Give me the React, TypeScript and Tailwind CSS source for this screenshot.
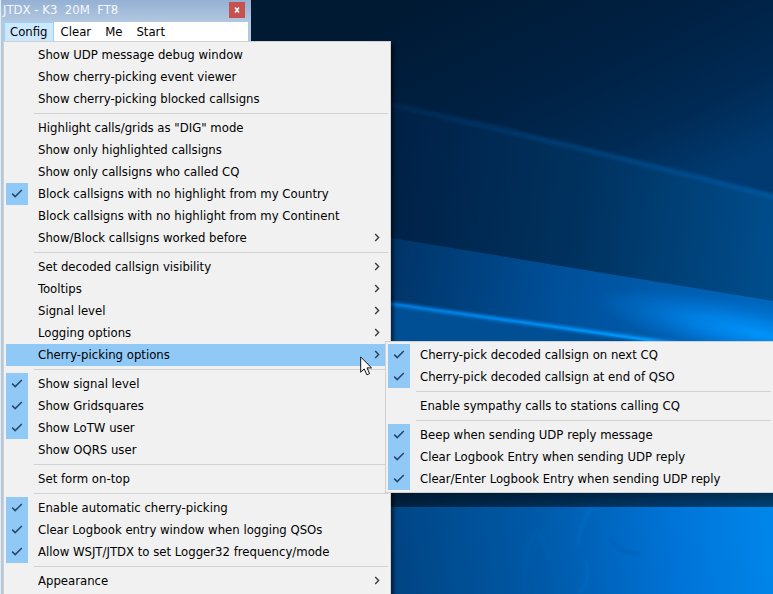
import React from "react";

type Item = {
  label: string;
  checked?: boolean;
  submenu?: boolean;
  active?: boolean;
};

const configMenu: Item[][] = [
  [
    { label: "Show UDP message debug window" },
    { label: "Show cherry-picking event viewer" },
    { label: "Show cherry-picking blocked callsigns" },
  ],
  [
    { label: 'Highlight calls/grids as "DIG" mode' },
    { label: "Show only highlighted callsigns" },
    { label: "Show only callsigns who called CQ" },
    { label: "Block callsigns with no highlight from my Country", checked: true },
    { label: "Block callsigns with no highlight from my Continent" },
    { label: "Show/Block callsigns worked before", submenu: true },
  ],
  [
    { label: "Set decoded callsign visibility", submenu: true },
    { label: "Tooltips", submenu: true },
    { label: "Signal level", submenu: true },
    { label: "Logging options", submenu: true },
    { label: "Cherry-picking options", submenu: true, active: true },
  ],
  [
    { label: "Show signal level", checked: true },
    { label: "Show Gridsquares", checked: true },
    { label: "Show LoTW user", checked: true },
    { label: "Show OQRS user" },
  ],
  [{ label: "Set form on-top" }],
  [
    { label: "Enable automatic cherry-picking", checked: true },
    { label: "Clear Logbook entry window when logging QSOs", checked: true },
    { label: "Allow WSJT/JTDX to set Logger32 frequency/mode", checked: true },
  ],
  [{ label: "Appearance", submenu: true }],
];

const cherryMenu: Item[][] = [
  [
    { label: "Cherry-pick decoded callsign on next CQ", checked: true },
    { label: "Cherry-pick decoded callsign at end of QSO", checked: true },
  ],
  [{ label: "Enable sympathy calls to stations calling CQ" }],
  [
    { label: "Beep when sending UDP reply message", checked: true },
    { label: "Clear Logbook Entry when sending UDP reply", checked: true },
    { label: "Clear/Enter Logbook Entry when sending UDP reply", checked: true },
  ],
];

function Check() {
  return (
    <svg viewBox="0 0 22 22" className="col-start-1 row-start-1 size-[22px]" aria-hidden="true">
      <path d="M6.2 10.6 L9.2 13.6 L15.8 7" fill="none" stroke="#24486a" strokeWidth="1.5" />
    </svg>
  );
}

function Row({ item }: { item: Item }) {
  if (item.checked) {
    return (
      <label className="flex h-[22px] items-center">
        <span className="mr-2.5 grid size-[22px] bg-[#90c8f6]">
          <input type="checkbox" defaultChecked className="col-start-1 row-start-1 size-[22px] appearance-none" />
          <Check />
        </span>
        {item.label}
      </label>
    );
  }
  return (
    <button
      type="button"
      role="menuitem"
      aria-haspopup={item.submenu ? "menu" : undefined}
      className={
        "flex h-[22px] w-full items-center justify-between pr-[5px] pl-8 text-left " +
        (item.active ? "bg-[#90c8f6]" : "")
      }
    >
      {item.label}
      {item.submenu && (
        <svg viewBox="0 0 8 10" className="h-2.5 w-2" aria-hidden="true">
          <path d="M2.2 1 L5.6 4.5 L2.2 8" fill="none" stroke="#3a3a3a" strokeWidth="1.4" />
        </svg>
      )}
    </button>
  );
}

function Menu({ groups, name }: { groups: Item[][]; name: string }) {
  return (
    <div role="menu" aria-label={name} className="border border-[#d0d0d0] bg-[#f1f1f1] py-0.5 pr-1 pl-0.5">
      {groups.map((group, i) => (
        <React.Fragment key={i}>
          {i > 0 && (
            <div role="separator" className="-mr-0.5 ml-7 flex h-[7px] items-center">
              <div className="h-px w-full bg-[#d2d2d2]" />
            </div>
          )}
          {group.map((item) => (
            <Row key={item.label} item={item} />
          ))}
        </React.Fragment>
      ))}
    </div>
  );
}

function Wallpaper() {
  return (
    <svg
      viewBox="0 0 773 594"
      preserveAspectRatio="none"
      className="absolute inset-0 size-full"
      aria-hidden="true"
    >
      <defs>
        <linearGradient id="sky" gradientUnits="userSpaceOnUse" x1="440" y1="0" x2="560" y2="250">
          <stop offset="0" stopColor="#001a34" />
          <stop offset="0.45" stopColor="#002144" />
          <stop offset="0.75" stopColor="#002a54" />
          <stop offset="1" stopColor="#003a70" />
        </linearGradient>
        <linearGradient id="mid" gradientUnits="userSpaceOnUse" x1="392" y1="180" x2="773" y2="240">
          <stop offset="0" stopColor="#002147" />
          <stop offset="0.5" stopColor="#00325f" />
          <stop offset="1" stopColor="#004d8c" />
        </linearGradient>
        <linearGradient id="low" gradientUnits="userSpaceOnUse" x1="392" y1="260" x2="773" y2="320">
          <stop offset="0" stopColor="#003467" />
          <stop offset="0.45" stopColor="#00509a" />
          <stop offset="1" stopColor="#0068c0" />
        </linearGradient>
        <linearGradient id="beam" gradientUnits="userSpaceOnUse" x1="392" y1="303" x2="680" y2="345">
          <stop offset="0" stopColor="#0077d8" />
          <stop offset="1" stopColor="#009aff" />
        </linearGradient>
        <linearGradient id="edge" gradientUnits="userSpaceOnUse" x1="392" y1="0" x2="773" y2="0">
          <stop offset="0" stopColor="#00386d" stopOpacity="0.3" />
          <stop offset="0.5" stopColor="#003e76" />
          <stop offset="1" stopColor="#00559c" />
        </linearGradient>
        <linearGradient id="floor" gradientUnits="userSpaceOnUse" x1="392" y1="580" x2="773" y2="530">
          <stop offset="0" stopColor="#004482" />
          <stop offset="0.4" stopColor="#005aa9" />
          <stop offset="0.75" stopColor="#0074d8" />
          <stop offset="1" stopColor="#0086ea" />
        </linearGradient>
        <radialGradient id="glow">
          <stop offset="0" stopColor="#0094fa" />
          <stop offset="0.4" stopColor="#0086ec" stopOpacity="0.8" />
          <stop offset="1" stopColor="#0078dc" stopOpacity="0" />
        </radialGradient>
        <filter id="soft" x="-10%" y="-50%" width="120%" height="200%">
          <feGaussianBlur stdDeviation="1.5" />
        </filter>
        <clipPath id="lowClip">
          <path d="M380 236 L773 301 V360 H380Z" />
        </clipPath>
      </defs>
      <rect width="773" height="594" fill="url(#sky)" />
      <path d="M380 103 Q560 142 773 196 V310 H380Z" fill="url(#mid)" />
      <path d="M385 103 Q560 142 783 199" fill="none" stroke="url(#edge)" strokeWidth="5" filter="url(#soft)" />
      <path d="M380 236 L773 301 V360 H380Z" fill="url(#low)" />
      <g clipPath="url(#lowClip)">
        <ellipse cx="760" cy="334" rx="170" ry="30" transform="rotate(12 760 334)" fill="url(#glow)" />
      </g>
      <path d="M385 303 L680 344 L670 350 L385 350Z" fill="#004f94" />
      <path d="M385 303 L700 347" stroke="url(#beam)" strokeWidth="4" filter="url(#soft)" />
      <path d="M392 304 L690 346" stroke="url(#beam)" strokeWidth="2" />
      <rect y="480" width="773" height="114" fill="url(#floor)" />
      <g fill="none" filter="url(#soft)" opacity="0.2">
        <path d="M611 540 Q620 554 640 553" stroke="#00408c" strokeWidth="3" />
        <path d="M578 545 Q580 520 593 508" stroke="#0080e0" strokeWidth="4" />
        <path d="M526 594 Q522 550 536 530 Q545 545 552 560" stroke="#0068bd" strokeWidth="5" />
        <path d="M585 560 Q592 575 580 594" stroke="#0080e0" strokeWidth="4" />
      </g>
    </svg>
  );
}

export default function App() {
  return (
    <main className="relative h-screen overflow-hidden bg-[#001b36] font-['Tahoma','DejaVu_Sans_Condensed','DejaVu_Sans',sans-serif] text-[13px] leading-4 text-black">
      <Wallpaper />

      <section className="absolute top-0 left-0 h-full w-[251px] border-l border-[#e4ebf2] bg-[#b3c8dc] px-[3px]">
        <header className="-mx-[3px] flex h-[22px] items-start justify-between bg-linear-to-b from-[#94b0d3] to-[#b2c8e0] pr-1.5 pl-0.5">
          <h1 className="pt-0.5 whitespace-pre text-[#f4f8fc]">JTDX - K3  20M  FT8</h1>
          <button
            type="button"
            aria-label="Close"
            className="mt-0.5 grid size-4 place-items-center bg-[#c75050]"
          >
            <svg viewBox="0 0 8 8" className="size-2" aria-hidden="true">
              <path d="M2 1.5 L6 6.5 M6 1.5 L2 6.5" stroke="#fff" strokeWidth="1.5" />
            </svg>
          </button>
        </header>
        <nav className="flex h-5 bg-white">
          <button type="button" className="border border-[#99d1ff] bg-[#cce8ff] px-[5px]">Config</button>
          <button type="button" className="px-[7px]">Clear</button>
          <button type="button" className="px-[7px]">Me</button>
          <button type="button" className="px-[7px]">Start</button>
        </nav>
      </section>

      <div className="absolute top-[41px] left-[3px] w-[388px] shadow-[3px_3px_3px_rgba(0,0,0,0.5)]">
        <Menu groups={configMenu} name="Config" />
      </div>

      <div className="absolute top-[493px] right-0 left-[391px] h-3.5 bg-linear-to-b from-black/65 to-black/50" />
      <div className="absolute top-[341px] left-[385px] w-[389px]">
        <Menu groups={cherryMenu} name="Cherry-picking options" />
      </div>

      <svg viewBox="0 0 13 20" className="absolute top-[356px] left-[360px] h-5 w-[13px]" aria-hidden="true">
        <path
          d="M0.7 1 V16.2 L4.2 12.9 L6.9 18.8 L9.6 17.6 L7 11.9 H11.6 Z"
          fill="#fff"
          stroke="#111"
          strokeWidth="1"
        />
      </svg>
    </main>
  );
}
